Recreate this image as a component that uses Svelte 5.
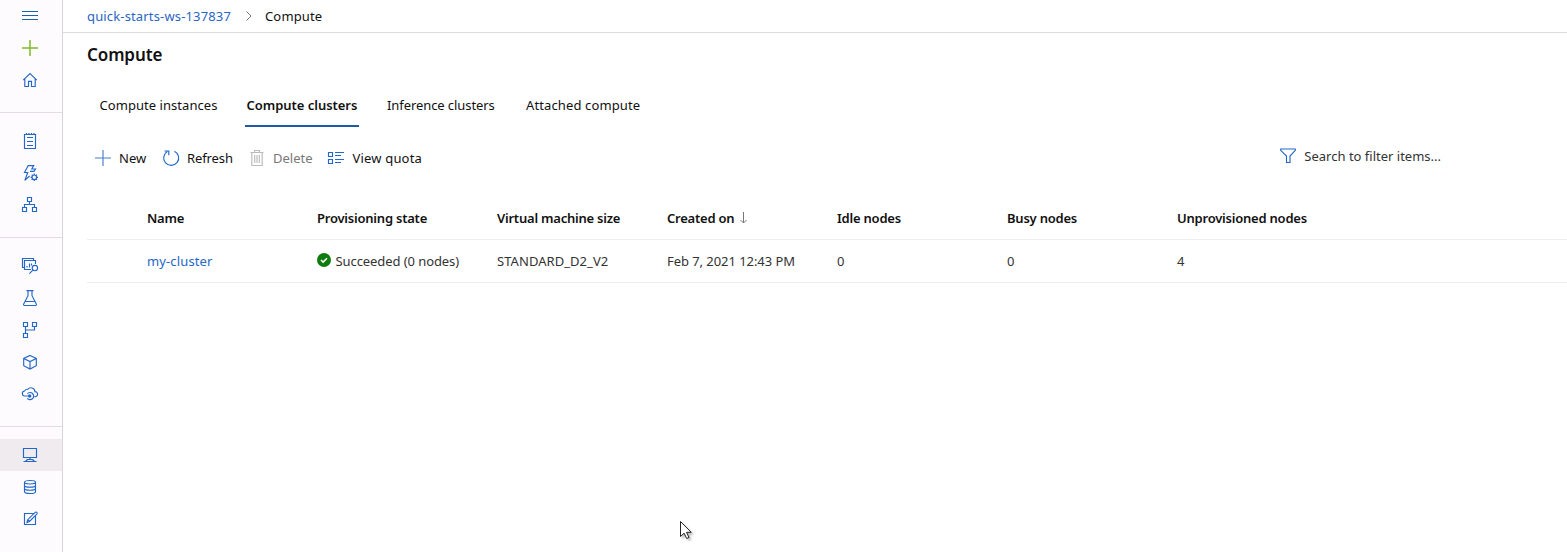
<script>
  const navGroups = [
    ['menu', 'add', 'home'],
    ['notebook', 'automl', 'designer'],
    ['datasets', 'experiments', 'pipelines', 'models', 'endpoints'],
    ['compute', 'datastores', 'labeling']
  ];
  const tabs = ['Compute instances', 'Compute clusters', 'Inference clusters', 'Attached compute'];
  const columns = ['Name', 'Provisioning state', 'Virtual machine size', 'Created on', 'Idle nodes', 'Busy nodes', 'Unprovisioned nodes'];
  const row = ['my-cluster', 'Succeeded (0 nodes)', 'STANDARD_D2_V2', 'Feb 7, 2021 12:43 PM', '0', '0', '4'];
</script>

{#snippet icon(name)}
  <svg class="icon {name}" viewBox="0 0 16 16" width="16" height="16" aria-hidden="true">
    {#if name === 'menu'}
      <path d="M0 3.5h16M0 7.5h16M0 11.5h16" />
    {:else if name === 'add' || name === 'new'}
      <path d="M0 8h16M8 0v16" />
    {:else if name === 'home'}
      <path d="M1.2 8.2 8 1.6l6.8 6.6M2.8 7v7.5h3.7V9.3h3v5.2h3.7V7" />
    {:else if name === 'notebook'}
      <path d="M2.5 1.5h11v14h-11zM4.5 0v2M7 0v2M9.500 0v2M12 0v2M5 4.5h6M5 8.500h6M5 12.500h6" />
    {:else if name === 'automl'}
      <path d="M8 6.300h4L13.500 4H9.800L11.700.6H6.200L2.500 7.500h3.200L2.800 15.400 7.600 11" />
      <circle cx="12.300" cy="12.300" r="2.300" />
      <path d="M12.300 8.600v1.500M12.300 14.500V16M8.600 12.300h1.500M14.500 12.300H16M9.700 9.700l1 1M13.900 13.900l1 1M9.700 14.900l1-1M13.900 10.700l1-1" />
    {:else if name === 'designer'}
      <path d="M5.500.5h4v4h-4zM.5 10.500h4v4h-4zM10.500 10.500h4v4h-4zM7.500 4.500v3M2.500 10.500v-3h10v3" />
    {:else if name === 'datasets'}
      <path d="M2.500 9.500h-2v-9h11v2M9 11.500H2.500v-9h11V6M5 9.500V8M7.500 9.500v-4M9.500 7.500v-2M7.400 15.600l3.500-3.500" />
      <circle cx="12.900" cy="10" r="2.700" />
    {:else if name === 'experiments'}
      <path d="M4.500.6h7M6 .6v5.100L1.700 14c-.4.800 0 1.500.900 1.500h10.800c.9 0 1.300-.7.900-1.500L10 5.700V.6M3.400 11.500h9.200" />
    {:else if name === 'pipelines'}
      <path d="M1.500.5h4v4h-4zM10.500.5h4v4h-4zM1.500 11.500h4v4h-4zM3.500 4.500v7M3.500 8h9V4.500" />
    {:else if name === 'models'}
      <path d="m8 1.500 6.300 2.900v7.300L8 15.100l-6.300-3.400V4.400zM1.700 4.400 8 7.500l6.300-3.100M8 7.500v7.600" />
    {:else if name === 'endpoints'}
      <path d="M4 10H3.100A2.500 2.500 0 0 1 2.600 5 3.300 3.300 0 0 1 5.700 3.300 4.100 4.100 0 0 1 13 5.700 2.400 2.400 0 0 1 13.200 10.700h-1" />
      <path d="M5.300 7.700a3.600 3.600 0 1 1-.1 4.600M4 10h3.500" />
      <circle class="solid" cx="7.700" cy="10" r="1.700" />
    {:else if name === 'compute'}
      <path d="M1.500 1.500h13v9h-13zM8 10.500v2M5.500 12.500h5M1.500 14.500h13M5.500 12.500l-2 2M10.500 12.500l2 2" />
    {:else if name === 'datastores'}
      <path d="M2.500 3.300C2.500.900 13.500.900 13.500 3.300v9.400c0 2.400-11 2.400-11 0zM2.500 3.300c0 2.200 11 2.200 11 0M2.500 6.400c0 2.300 11 2.300 11 0M2.500 9.500c0 2.300 11 2.300 11 0" />
    {:else if name === 'labeling'}
      <path d="M12 2.500H2.500v11h11V5M5 11.500l.7-2.800 7.700-7.500c1.200-.6 2.200.6 1.600 1.600l-7.500 7.700zM5.700 8.700l1.800 1.800" />
    {:else if name === 'refresh'}
      <path d="M11.500 1.200A7.500 7.500 0 1 1 4.300 1.500M1.500 1h4.300v4.300" />
    {:else if name === 'delete'}
      <path d="M1.500 2.500h13M5.500 2.500v-2h5v2M2.800 2.500v13h10.400v-13M5.700 5v8M8 5v8M10.300 5v8" />
    {:else if name === 'quota'}
      <path d="M.5 2.500h4v4h-4zM.5 9.500h4v4h-4zM7 2.500h9M7 5.500h6M7 9.500h9M7 12.500h6" />
    {:else if name === 'filter'}
      <path d="M.7 1h14.600v1.300L10 8v6.500H6.500V8L.7 2.300z" />
    {/if}
  </svg>
{/snippet}

<div class="shell">
  <nav>
    {#each navGroups as group}
      <div class="group">
        {#each group as name}
          <div class="item" class:active={name === 'compute'}>{@render icon(name)}</div>
        {/each}
      </div>
    {/each}
  </nav>

  <main>
    <header>
      <a class="workspace">quick-starts-ws-137837</a>
      <svg class="chevron" viewBox="0 0 6 10" width="6" height="10"><path d="m.5.5 4.500 4.500-4.500 4.500" /></svg>
      <span class="crumb">Compute</span>
    </header>

    <h1>Compute</h1>

    <div class="tabs">
      {#each tabs as tab, i}
        <div class="tab t{i}" class:selected={i === 1}>{tab}</div>
      {/each}
    </div>

    <div class="toolbar">
      <div class="command c0">{@render icon('new')}<span>New</span></div>
      <div class="command c1">{@render icon('refresh')}<span>Refresh</span></div>
      <div class="command c2 disabled">{@render icon('delete')}<span>Delete</span></div>
      <div class="command c3">{@render icon('quota')}<span>View quota</span></div>
      <div class="search">{@render icon('filter')}<span>Search to filter items...</span></div>
    </div>

    <div class="table">
      <div class="row head">
        {#each columns as column, i}
          <div><span>{column}</span>{#if i === 3}<svg class="sort" viewBox="0 0 8 12" width="8" height="12"><path d="M4.500 0v11M1.500 8l3 3 3-3" /></svg>{/if}</div>
        {/each}
      </div>
      <div class="row">
        {#each row as value, i}
          <div class="v{i}">
            {#if i === 1}<svg class="status" viewBox="0 0 14 14" width="14" height="14"><circle cx="7" cy="7" r="7" /><path d="m4 7 2.100 2.100L10 5.200" /></svg>{/if}<span>{value}</span>
          </div>
        {/each}
      </div>
    </div>
  </main>

  <svg class="pointer" viewBox="0 0 14 21" width="14" height="21"><path d="M1.500 1.500v15l3.600-3.300 2.600 5.300 2.300-1.100-2.500-5.100h4.700z" /></svg>
</div>

<style>
  .shell {
    display: flex;
    position: relative;
    width: 100%;
    height: 552px;
    overflow: hidden;
    background: #fff;
    color: #111;
    font: 13px/20px "Noto Sans", "Open Sans", sans-serif;
    white-space: nowrap;
  }
  nav {
    flex: none;
    box-sizing: border-box;
    width: 63px;
    background: #fefbfe;
    border-right: 1px solid #d9d5db;
  }
  .group { padding: 12px 0 16px; border-top: 1px solid #e2dee3; }
  .group:first-child { padding-top: 0; border-top: 0; }
  .item { display: flex; align-items: center; height: 32px; padding-left: 22px; }
  .item.active { background: #efebef; }
  .icon { flex: none; display: block; fill: none; stroke: #2368c8; stroke-width: 1.15; overflow: visible; }
  .icon .solid { fill: #2368c8; stroke: none; }
  .icon.menu { stroke: #1863a8; }
  .icon.add { stroke: #7fba27; stroke-width: 1.5; }
  .icon.new { stroke: #4a7dcb; }

  main { flex: 1; min-width: 0; }
  header {
    display: flex;
    align-items: center;
    box-sizing: border-box;
    height: 33px;
    padding-left: 24px;
    border-bottom: 1px solid #dcdcdc;
  }
  .workspace { width: 145px; color: #2a66c4; letter-spacing: 0.15px; }
  .chevron { margin: 0 13px 0 14px; fill: none; stroke: #777; }
  .crumb { letter-spacing: 0.15px; }
  h1 { margin: 10px 0 0 24px; font-size: 17px; line-height: 24px; font-weight: 600; letter-spacing: -0.1px; color: #111; }

  .tabs { display: flex; margin: 18px 0 0 35px; }
  .tab { box-sizing: border-box; height: 42px; padding: 10px 1px 0; border-bottom: 2px solid transparent; }
  .t0 { width: 120px; margin-right: 27px; padding-left: 1.5px; letter-spacing: 0.05px; }
  .t1 { width: 114px; margin-right: 27px; padding-left: 1.5px; letter-spacing: -0.03px; }
  .t2 { width: 112px; margin-right: 27px; letter-spacing: -0.08px; }
  .t3 { letter-spacing: 0.12px; }
  .tab.selected { font-weight: 600; border-color: #1f58a3; }

  .toolbar { display: flex; align-items: center; height: 62px; padding-left: 32px; }
  .command { display: flex; align-items: center; gap: 8px; }
  .c0 { width: 68px; }
  .c1 { width: 86px; letter-spacing: -0.1px; }
  .c2 { width: 79px; }
  .c3 { letter-spacing: 0.18px; gap: 8.5px; }
  .disabled { color: #777; }
  .disabled .icon { stroke: #bbb; }
  .search { display: flex; align-items: center; gap: 8px; margin: 0 126px 4px auto; color: #333; }

  .table { margin: 8px 0 0 24px; }
  .row {
    display: grid;
    grid-template-columns: 170px 180px 170px 170px 170px 170px 1fr;
    align-items: center;
    box-sizing: border-box;
    height: 43px;
    padding-left: 60px;
    border-bottom: 1px solid #eee;
    color: #333;
  }
  .row > div { display: flex; align-items: center; }
  .head { color: #111; font-weight: 600; letter-spacing: -0.22px; }
  .row > .v0 { color: #2368c8; letter-spacing: 0.13px; }
  .v1 { letter-spacing: -0.08px; }
  .v2 { letter-spacing: 0.06px; }
  .v3 { letter-spacing: -0.06px; }
  .sort { margin-left: 5px; fill: none; stroke: #777; }
  .status { margin: -2px 4.5px 0 0; fill: #107c10; }
  .status path { fill: none; stroke: #fff; stroke-width: 1.5; }
  .pointer {
    position: absolute;
    left: 679px;
    top: 520px;
    fill: #fff;
    stroke: #222;
    filter: drop-shadow(2px 2px 1px #0004);
  }
</style>
